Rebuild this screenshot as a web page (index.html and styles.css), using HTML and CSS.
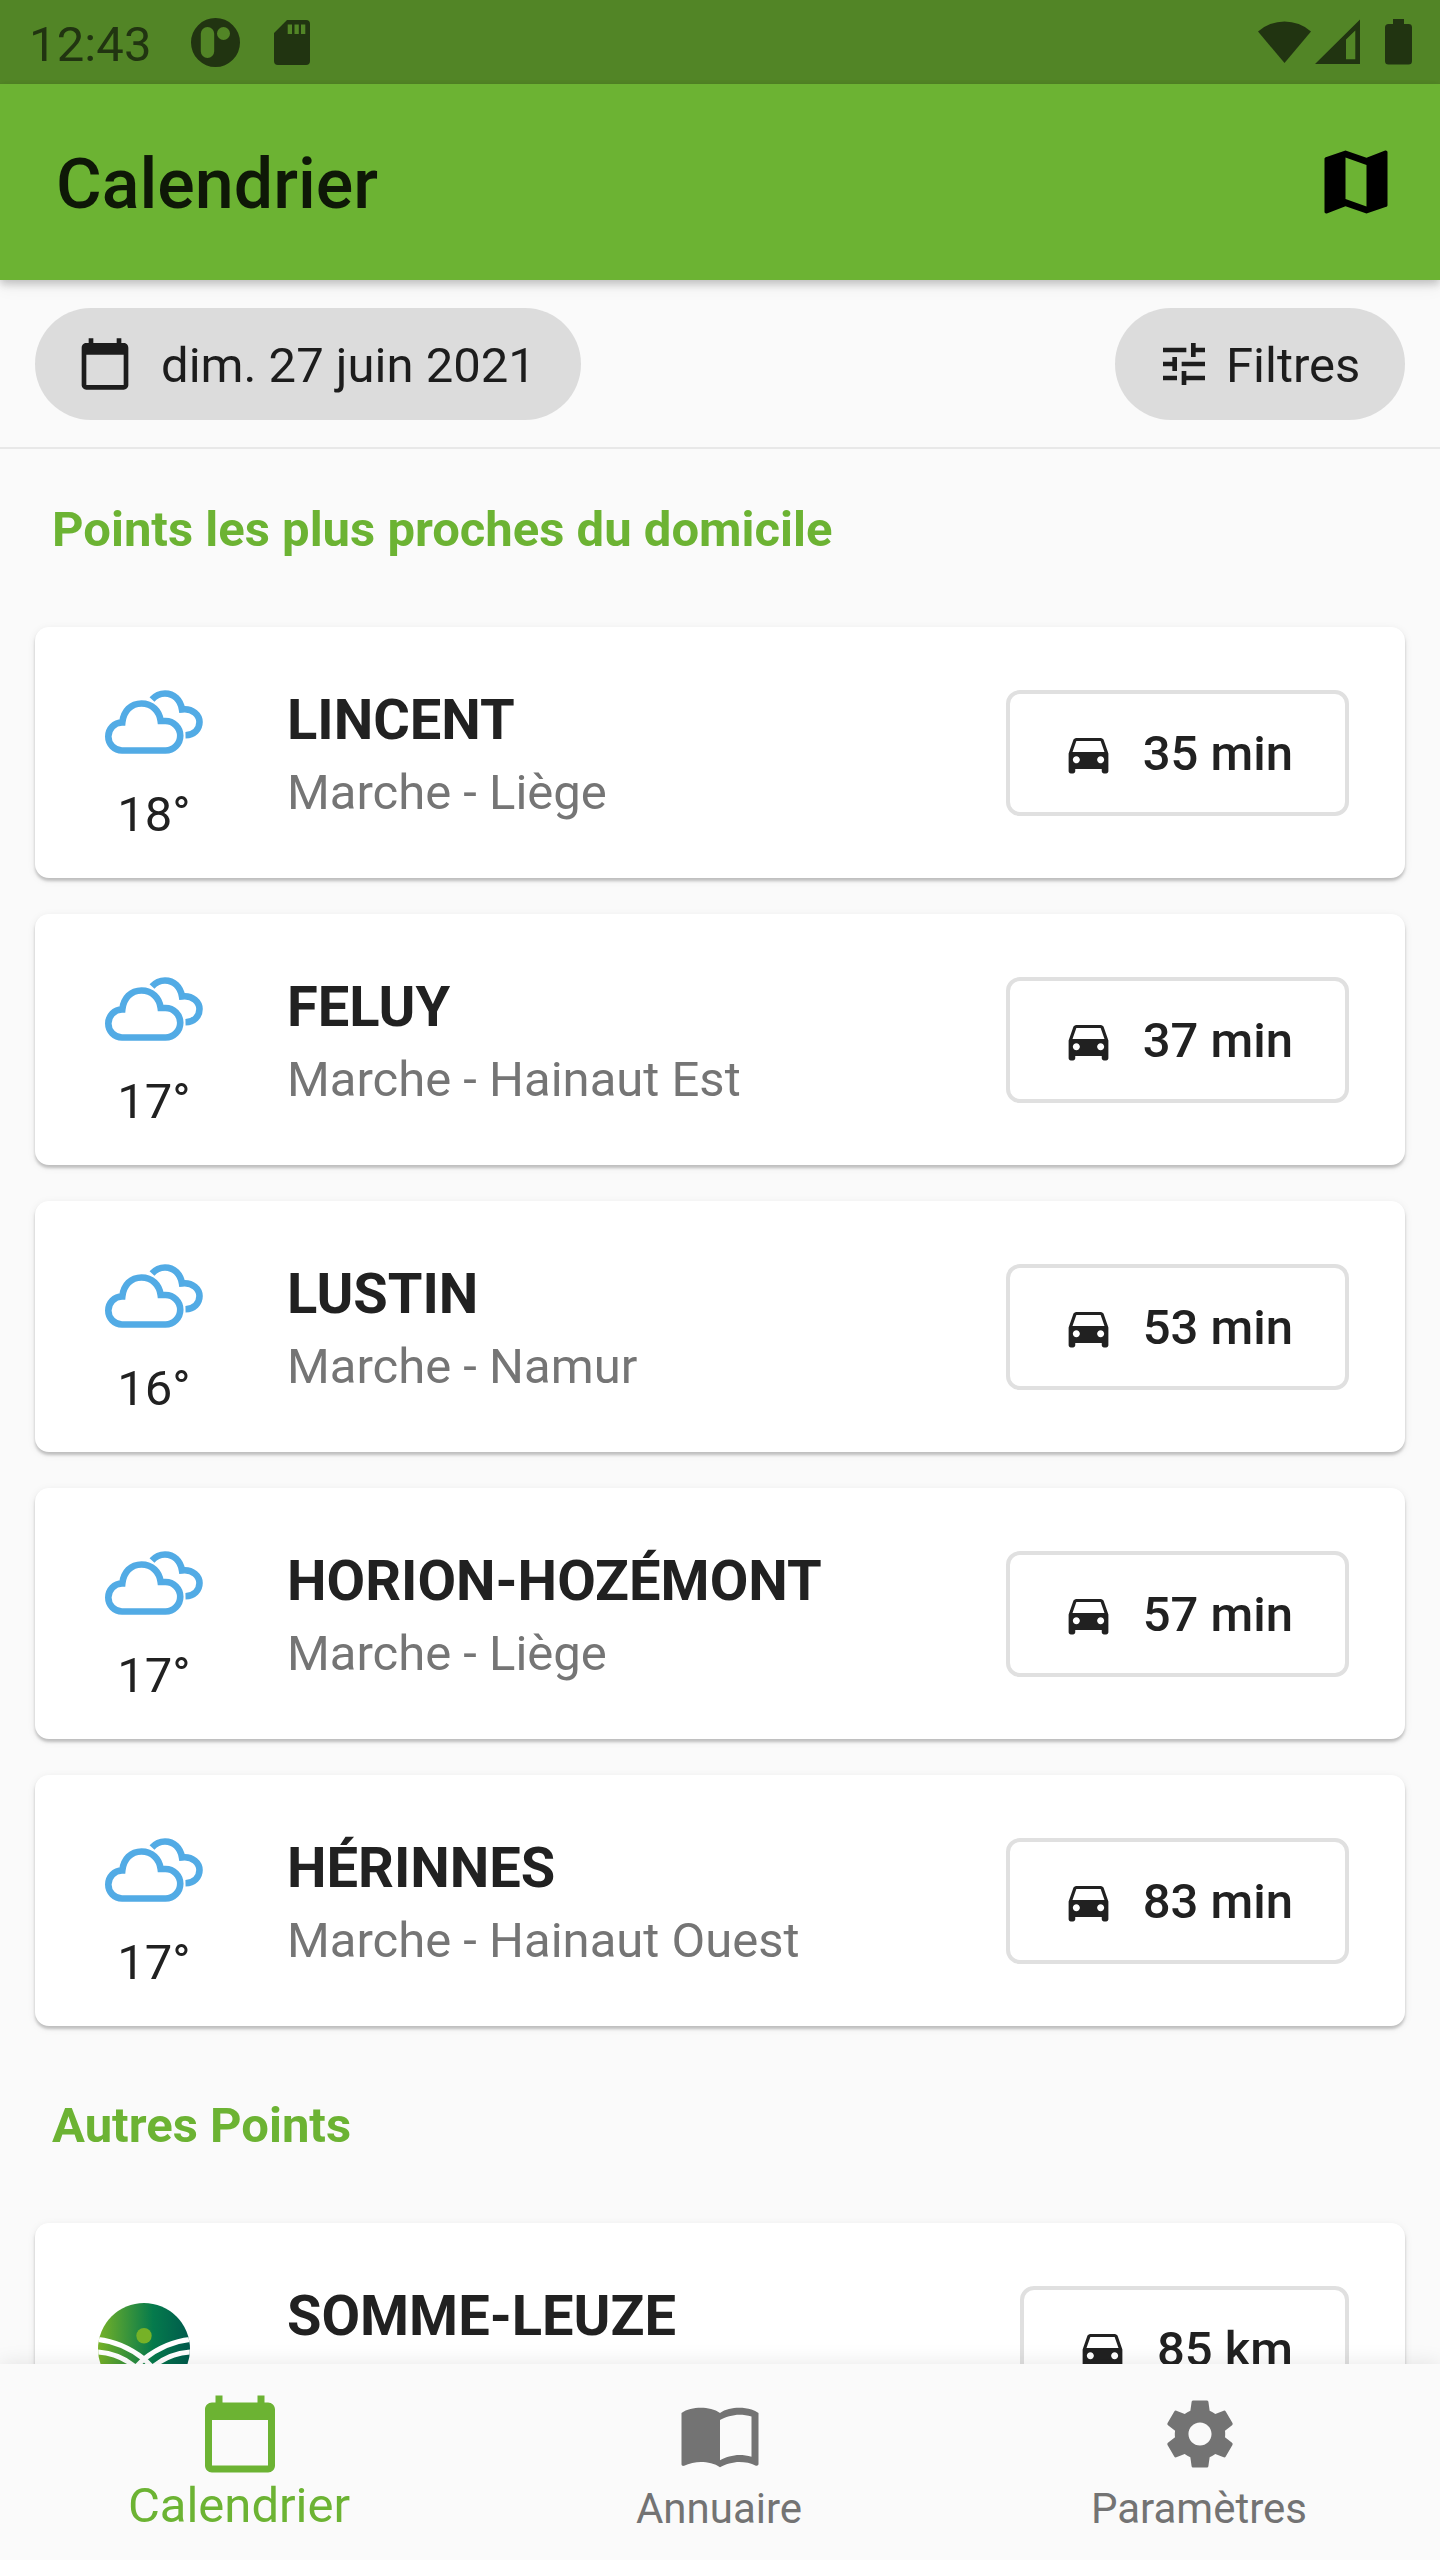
FILE: index.html
```
<!DOCTYPE html>
<html lang="fr">
<head>
<meta charset="utf-8">
<title>Calendrier</title>
<link rel="stylesheet" href="styles.css">
</head>
<body>
<svg class="defs" width="0" height="0">
  <symbol id="car" viewBox="0 0 24 24"><path d="M18.92 6.01C18.72 5.42 18.16 5 17.5 5h-11c-.66 0-1.21.42-1.42 1.01L3 12v8c0 .55.45 1 1 1h1c.55 0 1-.45 1-1v-1h12v1c0 .55.45 1 1 1h1c.55 0 1-.45 1-1v-8l-2.080-5.990zM6.500 6.300h11l1.750 5H4.750zM6.500 16.400c-.83 0-1.600-.770-1.600-1.600s.77-1.600 1.600-1.600 1.600.77 1.600 1.600-.77 1.600-1.600 1.600zm11 0c-.83 0-1.600-.77-1.600-1.600s.77-1.600 1.600-1.600 1.600.77 1.600 1.600-.77 1.600-1.600 1.600z" fill-rule="evenodd"/></symbol>
  <symbol id="clouds" viewBox="0 0 98 64"><g fill="none" stroke="#52abe5" stroke-width="6.600"><path d="M17 60.500A13.700 14 0 0 1 17 32.500H17.300C18.500 21 26 13.500 36.500 13.500S54.500 21 55.700 31H60.500A14.750 14.750 0 0 1 60.500 60.500Z"/><path d="M47 9.500C50.500 5.600 55 3.500 60 3.500C69 3.500 75.500 10 77 19.400C88 18 94.500 25.500 94.500 32C94.500 39.500 89 45 80.500 45.200"/></g></symbol>
  <symbol id="calendar" viewBox="0 0 24 24"><path d="M20 3h-1V1h-2v2H7V1H5v2H4c-1.100 0-2 .9-2 2v16c0 1.100.9 2 2 2h16c1.100 0 2-.9 2-2V5c0-1.100-.9-2-2-2zm0 18H4V8h16v13z"/></symbol>
</svg>
<div class="screen">
  <header class="status">
    <span class="clock">12:43</span>
    <svg class="st-app" viewBox="0 0 49 49"><path fill-rule="evenodd" d="M24.500 0a24.500 24.500 0 1 0 0 49a24.500 24.500 0 0 0 0-49zM16.500 9a6.700 6.700 0 0 1 6.700 6.700v17.600a6.700 6.700 0 0 1-13.400 0V15.700a6.700 6.700 0 0 1 6.700-6.700zM32.500 9a6.500 6.500 0 1 1 0 13a6.500 6.500 0 0 1 0-13z"/></svg>
    <svg class="st-sd" viewBox="0 0 36 45"><path fill-rule="evenodd" d="M13 0H32a4 4 0 0 1 4 4V41a4 4 0 0 1-4 4H4a4 4 0 0 1-4-4V13zM13.700 4.500V14h4.300V4.500zM20.500 4.500V14h4.300V4.500zM27 4.500V14h4.300V4.500z"/></svg>
    <svg class="st-net" viewBox="0 0 154 46"><path d="M0 12.500A40 40 0 0 1 53 12.500L26.500 44z"/><path fill-rule="evenodd" d="M57 45L102 0.500V45zM88 20.500V40.300h9.300V11.500z"/><path d="M135 0h11v5h4.500a3.500 3.500 0 0 1 3.500 3.500V42a3.500 3.500 0 0 1-3.500 3.500h-20a3.500 3.500 0 0 1-3.500-3.500V8.500a3.500 3.500 0 0 1 3.500-3.500h4.500z"/></svg>
  </header>
  <div class="appbar">
    <h1>Calendrier</h1>
    <svg viewBox="0 0 24 24"><path d="M20.500 3l-.16.030L15 5.100 9 3 3.360 4.900c-.21.070-.36.250-.36.480V20.500c0 .28.220.5.500.5l.16-.030L9 18.900l6 2.100 5.640-1.900c.21-.070.36-.25.36-.480V3.500c0-.28-.22-.5-.5-.5zM15 19l-6-2.110V5l6 2.110V19z"/></svg>
  </div>
  <div class="filters">
    <button class="chip date"><svg viewBox="0 0 24 24"><use href="#calendar"/></svg><span>dim. 27 juin 2021</span></button>
    <button class="chip tune"><svg viewBox="0 0 24 24"><path d="M3 17v2h6v-2H3zM3 5v2h10V5H3zm10 16v-2h8v-2h-8v-2h-2v6h2zM7 9v2H3v2h4v2h2V9H7zm14 4v-2H11v2h10zm-6-4h2V7h4V5h-4V3h-2v6z"/></svg><span>Filtres</span></button>
  </div>
  <main class="list">
    <h2>Points les plus proches du domicile</h2>
    <article class="card"><div class="weather"><svg><use href="#clouds"/></svg><span>18°</span></div><div class="place"><h3>LINCENT</h3><p>Marche - Liège</p></div><button class="trip"><svg><use href="#car"/></svg><span>35 min</span></button></article>
    <article class="card"><div class="weather"><svg><use href="#clouds"/></svg><span>17°</span></div><div class="place"><h3>FELUY</h3><p>Marche - Hainaut Est</p></div><button class="trip"><svg><use href="#car"/></svg><span>37 min</span></button></article>
    <article class="card"><div class="weather"><svg><use href="#clouds"/></svg><span>16°</span></div><div class="place"><h3>LUSTIN</h3><p>Marche - Namur</p></div><button class="trip"><svg><use href="#car"/></svg><span>53 min</span></button></article>
    <article class="card"><div class="weather"><svg><use href="#clouds"/></svg><span>17°</span></div><div class="place"><h3>HORION-HOZÉMONT</h3><p>Marche - Liège</p></div><button class="trip"><svg><use href="#car"/></svg><span>57 min</span></button></article>
    <article class="card"><div class="weather"><svg><use href="#clouds"/></svg><span>17°</span></div><div class="place"><h3>HÉRINNES</h3><p>Marche - Hainaut Ouest</p></div><button class="trip"><svg><use href="#car"/></svg><span>83 min</span></button></article>
    <h2 class="others">Autres Points</h2>
    <article class="card"><div class="logo"><svg viewBox="0 0 92 92"><defs><linearGradient id="lg"><stop offset="0" stop-color="#76b227"/><stop offset=".6" stop-color="#057a4c"/><stop offset="1" stop-color="#005a4c"/></linearGradient><clipPath id="disc"><circle cx="46" cy="46" r="46"/></clipPath></defs><g clip-path="url(#disc)"><path fill="url(#lg)" d="M0 0H92V92H0z"/><circle cx="46" cy="32.800" r="7.700" fill="#76b227"/><g fill="none" stroke="#fff" stroke-width="5"><path d="M0 36.600C14 38 29 43 46 56L60 70M0 49C13 50 25 54 36 63L46 74M92 36.600C78 38 63 43 46 56L32 70M92 49C79 50 67 54 56 63L46 74"/></g></g></svg></div><div class="place"><h3>SOMME-LEUZE</h3></div><button class="trip"><svg><use href="#car"/></svg><span>85 km</span></button></article>
  </main>
  <nav class="tabs">
    <a class="tab active"><svg viewBox="0 0 24 24"><use href="#calendar"/></svg><span>Calendrier</span></a>
    <a class="tab"><svg viewBox="0 0 24 24"><path d="M21 5c-1.110-.35-2.330-.5-3.500-.5-1.950 0-4.050.4-5.500 1.500-1.450-1.100-3.550-1.500-5.500-1.500S2.450 4.900 1 6v14.650c0 .25.250.5.500.5.1 0 .15-.050.25-.050C3.100 20.450 5.050 20 6.500 20c1.950 0 4.050.4 5.500 1.500 1.350-.85 3.800-1.500 5.500-1.500 1.650 0 3.350.3 4.750 1.050.1.050.15.050.25.050.25 0 .5-.25.500-.500V6c-.6-.45-1.250-.75-2-1zm0 13.500c-1.100-.35-2.300-.5-3.500-.5-1.700 0-4.150.65-5.500 1.500V8c1.350-.85 3.800-1.500 5.500-1.500 1.200 0 2.400.15 3.500.5v11.500z"/></svg><span>Annuaire</span></a>
    <a class="tab"><svg viewBox="0 0 24 24"><path d="M19.140 12.940c.04-.3.060-.61.060-.94 0-.32-.020-.64-.070-.94l2.030-1.580c.18-.14.230-.41.120-.61l-1.920-3.320c-.12-.22-.37-.29-.59-.22l-2.390.96c-.5-.38-1.030-.7-1.620-.94l-.36-2.540c-.040-.24-.24-.41-.48-.41h-3.840c-.24 0-.43.170-.47.410l-.36 2.540c-.59.240-1.130.57-1.620.94l-2.390-.96c-.22-.080-.47 0-.59.220L2.740 8.870c-.12.210-.080.470.12.610l2.030 1.580c-.050.300-.090.630-.090.940s.020.640.070.940l-2.030 1.580c-.18.140-.23.410-.12.610l1.920 3.320c.12.220.37.290.59.220l2.390-.96c.5.380 1.030.7 1.620.94l.36 2.540c.050.240.24.410.48.410h3.840c.24 0 .44-.17.47-.41l.36-2.540c.59-.24 1.130-.56 1.620-.94l2.390.96c.22.080.47 0 .59-.22l1.920-3.320c.12-.22.070-.47-.12-.61l-2.010-1.580zM12 15.300c-1.820 0-3.300-1.480-3.300-3.300s1.480-3.300 3.300-3.300 3.300 1.480 3.300 3.300-1.480 3.300-3.300 3.300z"/></svg><span>Paramètres</span></a>
  </nav>
</div>
</body>
</html>
```
FILE: styles.css
```
* { box-sizing: border-box; }
body { margin: 0; background: #fafafa; font-family: Roboto, "Liberation Sans", sans-serif; color: #212121; }
h1, h2, h3, p { margin: 0; }
button { border: 0; background: none; font: inherit; color: inherit; margin: 0; }
svg { display: block; flex: none; }
.defs { position: absolute; }
.screen { width: 1440px; height: 2560px; display: flex; flex-direction: column; overflow: hidden; }

.status { height: 84px; flex: none; display: flex; align-items: flex-start; background: #528526; color: #213411; fill: #213411; padding: 0 28px 0 29px; }
.clock { font-size: 49px; line-height: 56px; margin-top: 17px; width: 162px; letter-spacing: 0.1px; }
.st-app { width: 49px; height: 49px; margin-top: 18px; }
.st-sd { width: 36px; height: 45px; margin: 20px 0 0 34px; }
.st-net { width: 154px; height: 46px; margin: 19px 0 0 auto; }

.appbar { height: 196px; flex: none; display: flex; align-items: center; justify-content: space-between; padding: 0 42px 0 56px; background: #6cb333; box-shadow: 0 4px 8px rgba(0,0,0,.2), 0 8px 16px rgba(0,0,0,.05); position: relative; }
.appbar h1 { font-size: 70px; font-weight: 500; line-height: 82px; color: #0e1807; padding-top: 4px; }
.appbar svg { width: 84px; height: 84px; fill: #000; }

.filters { height: 169px; flex: none; display: flex; justify-content: space-between; align-items: flex-start; padding: 28px 35px 0; border-bottom: 2px solid #e8e8e8; }
.chip { height: 112px; border-radius: 56px; background: #dcdcdc; color: #1d1d1d; fill: #1d1d1d; display: flex; align-items: center; font-size: 49px; line-height: 56px; }
.chip span { padding-top: 3px; }
.date { width: 546px; padding: 0 0 0 42px; gap: 28px; }
.date svg { width: 56px; height: 56px; }
.tune { width: 290px; padding: 0 0 0 41px; gap: 14px; }
.tune svg { width: 56px; height: 56px; }

.list { flex: 1; min-height: 0; overflow: hidden; padding: 0 35px; }
.list h2 { font-size: 49px; line-height: 58px; font-weight: 700; color: #6cb333; padding: 52px 17px 68px; }
.list h2.others { padding-top: 35px; }
.card { height: 251px; display: flex; align-items: flex-start; background: #fff; border-radius: 14px; margin-bottom: 36px; padding-right: 56px; box-shadow: 0 3px 3px rgba(0,0,0,.2), 0 2px 8px rgba(0,0,0,.08); }
.weather { width: 238px; display: flex; flex-direction: column; align-items: center; font-size: 49px; line-height: 56px; padding: 63px 0 0; }
.weather svg { width: 98px; height: 64px; margin-bottom: 33px; }
.logo { width: 217px; display: flex; justify-content: center; padding-top: 80px; margin-right: 21px; }
.logo svg { width: 92px; height: 92px; }
.place { flex: 1; margin-left: 14px; padding-top: 60px; }
.place h3 { font-size: 56px; line-height: 66px; font-weight: 700; }
.place p { font-size: 49px; line-height: 58px; margin-top: 11px; color: #757575; }
.trip { height: 126px; margin-top: 63px; border: 4px solid #e0e0e0; border-radius: 14px; padding: 0 52px; display: flex; align-items: center; gap: 28px; font-size: 49px; font-weight: 500; line-height: 56px; }
.trip svg { width: 53px; height: 53px; fill: #212121; }
.trip span { padding-top: 1px; }

.tabs { height: 196px; flex: none; display: grid; grid-template-columns: repeat(3, 1fr); background: #fafafa; box-shadow: 0 0 20px rgba(0,0,0,.1); position: relative; }
.tab { display: flex; flex-direction: column; align-items: center; color: #737373; fill: #737373; font-size: 42px; line-height: 50px; padding-top: 28px; }
.tab svg { width: 84px; height: 84px; margin-bottom: 8px; }
.tab span { margin-right: 2px; }
.active { color: #6cb333; fill: #6cb333; font-size: 49px; line-height: 58px; }
.active svg { margin-bottom: 1px; }
```
